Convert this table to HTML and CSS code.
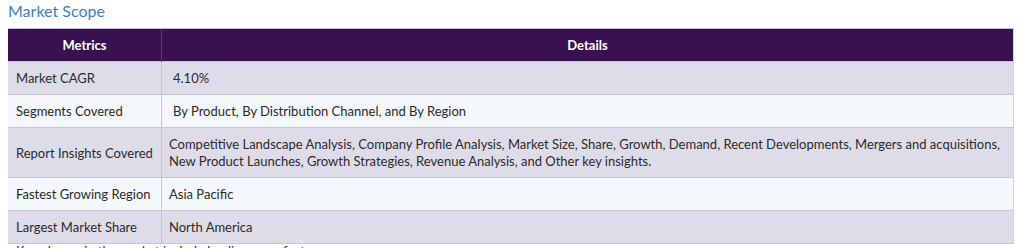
FILE: index.html
```html
<!DOCTYPE html>
<html>
<head>
<meta charset="utf-8">
<link rel="stylesheet" href="styles.css">
</head>
<body>
<div class="page">
  <h2 class="title">Market Scope</h2>
  <table class="scope">
    <thead>
      <tr><th class="c1">Metrics</th><th>Details</th></tr>
    </thead>
    <tbody>
      <tr class="odd"><td class="c1">Market CAGR</td><td class="indent">4.10%</td></tr>
      <tr class="even"><td class="c1">Segments Covered</td><td class="indent">By Product, By Distribution Channel, and By Region</td></tr>
      <tr class="odd"><td class="c1">Report Insights Covered</td><td>Competitive Landscape Analysis, Company Profile Analysis, Market Size, Share, Growth, Demand, Recent Developments, Mergers and acquisitions, New Product Launches, Growth Strategies, Revenue Analysis, and Other key insights.</td></tr>
      <tr class="even"><td class="c1">Fastest Growing Region</td><td>Asia Pacific</td></tr>
      <tr class="odd"><td class="c1">Largest Market Share</td><td>North America</td></tr>
    </tbody>
  </table>
  <p class="after">Key players in the market include leading manufacturers.</p>
</div>
</body>
</html>
```
FILE: styles.css
```css
html, body {
  margin: 0;
  padding: 0;
  background: #ffffff;
}
body {
  font-family: Lato, "Noto Sans", sans-serif;
  color: #2b2b2b;
}
.page {
  padding: 0 11px 0 8px;
}
.title {
  margin: 0;
  height: 28px;
  font-size: 16px;
  line-height: 21px;
  font-weight: 400;
  color: #3d80c2;
}
.scope {
  width: 1006px;
  border-collapse: collapse;
  font-size: 13px;
  line-height: 17px;
  border-right: 1px solid #d4d2dc;
}
.scope th {
  background: #3a1150;
  color: #ffffff;
  font-weight: 700;
  text-align: center;
  height: 32px;
  padding: 0;
  border-top: 1px solid #c9b8dc;
  border-left: 1px solid #5a3a70;
}
.scope th.c1 { border-left: none; }
.scope td {
  padding: 8px 7px 7px 7px;
  border-top: 1px solid #c7c4d3;
  border-left: 1px solid #c7c4d3;
  vertical-align: middle;
}
.scope td.c1 {
  width: 138px;
  border-left: none;
  padding-left: 8px;
}
.scope td.indent { padding-left: 11px; }
.scope tr.odd td { background: #dfdcea; }
.scope tr.even td { background: #f5f8fb; }
.scope tbody tr:last-child td { border-bottom: 1px solid #c7c4d3; }
.after {
  margin: 0 0 0 8px;
  font-size: 13px;
  line-height: 14px;
  color: #333333;
}
```
